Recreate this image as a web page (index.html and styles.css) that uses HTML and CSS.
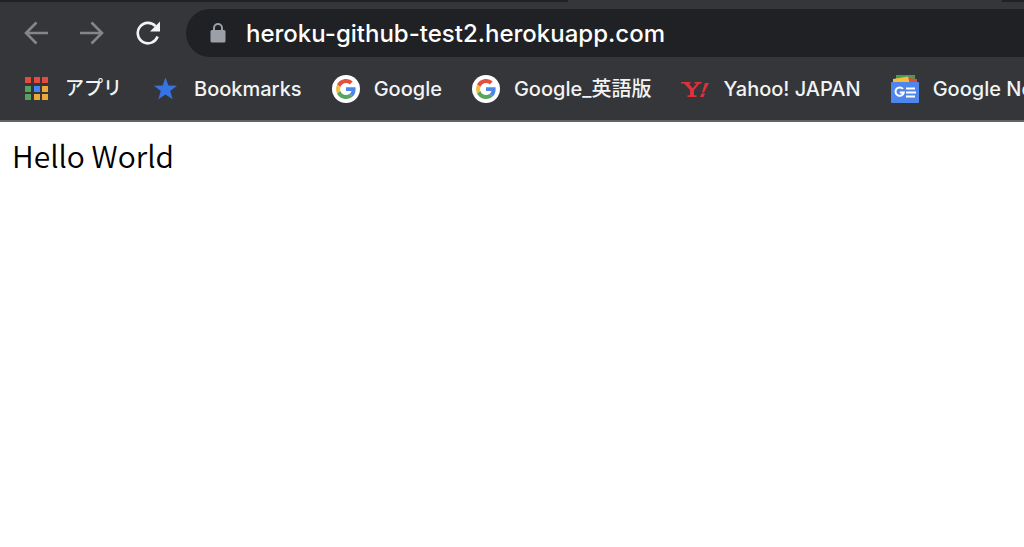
FILE: index.html
```html
<!DOCTYPE html>
<html lang="ja">
<head>
    <meta charset="UTF-8">
    <meta name="viewport" content="width=device-width, initial-scale=1.0">
    <title>heroku-github-test2.herokuapp.com</title>
    <link rel="stylesheet" href="styles.css">
</head>
<body>
    <svg class="symbols" aria-hidden="true">
        <symbol id="google" viewBox="0 0 28 28">
            <circle cx="14" cy="14" r="14" fill="#fff"/>
            <g transform="translate(4 4) scale(0.417)">
                <path fill="#e2503f" d="M24 9.5c3.54 0 6.71 1.22 9.21 3.6l6.85-6.85C35.9 2.38 30.47 0 24 0 14.62 0 6.51 5.38 2.56 13.22l7.98 6.19C12.43 13.72 17.74 9.5 24 9.5z"/>
                <path fill="#4f86ec" d="M46.98 24.55c0-1.57-.15-3.09-.38-4.55H24v9.02h12.94c-.58 2.96-2.26 5.48-4.78 7.18l7.73 6c4.51-4.18 7.09-10.36 7.09-17.65z"/>
                <path fill="#f3bd42" d="M10.53 28.59c-.48-1.45-.76-2.99-.76-4.59s.27-3.14.76-4.59l-7.98-6.19C.92 16.46 0 20.12 0 24c0 3.88.92 7.54 2.56 10.78l7.97-6.19z"/>
                <path fill="#58a55c" d="M24 48c6.48 0 11.93-2.13 15.89-5.81l-7.73-6c-2.15 1.45-4.92 2.3-8.16 2.3-6.26 0-11.57-4.22-13.47-9.91l-7.98 6.19C6.51 42.62 14.62 48 24 48z"/>
            </g>
        </symbol>
    </svg>

    <header class="browser">
        <div class="tab-strip">
            <div class="tab"></div>
        </div>

        <div class="toolbar">
            <button class="nav-button disabled" type="button" aria-label="Back">
                <svg width="24" height="24" viewBox="0 0 24 24"><path d="M24 12H2M12.500 1.500L2 12l10.500 10.500"/></svg>
            </button>
            <button class="nav-button disabled" type="button" aria-label="Forward">
                <svg width="24" height="24" viewBox="0 0 24 24"><path d="M0 12h22M11.500 1.500L22 12 11.500 22.500"/></svg>
            </button>
            <button class="nav-button" type="button" aria-label="Reload">
                <svg width="26" height="26" viewBox="0 0 26 26">
                    <path d="M22.6 16.5A10.2 10.2 0 1 1 20.5 6.2"/>
                    <path class="solid" d="M25 1.5v10H15z"/>
                </svg>
            </button>
            <div class="address-bar">
                <svg width="16" height="20" viewBox="0 0 16 20">
                    <path d="M4 8V5a4 4 0 0 1 8 0v3" fill="none" stroke="#9aa0a6" stroke-width="2"/>
                    <rect x="0.5" y="7" width="15" height="12.500" rx="1.5" fill="#9aa0a6"/>
                </svg>
                <input class="address" type="text" aria-label="Address" value="heroku-github-test2.herokuapp.com" spellcheck="false">
            </div>
        </div>

        <nav class="bookmarks">
            <a class="bookmark" href="#">
                <svg width="28" height="28" viewBox="0 0 28 28">
                    <path fill="#e34b3f" d="M2 2h6v6H2zM11 2h6v6h-6zM19 2h6v6h-6z"/>
                    <path fill="#57a15f" d="M2 11h6v6H2zM2 19h6v6H2z"/>
                    <path fill="#4285f4" d="M11 11h6v6h-6z"/>
                    <path fill="#eba93a" d="M19 11h6v6h-6zM11 19h6v6h-6zM19 19h6v6h-6z"/>
                </svg>
                <span class="kana">アプリ</span>
            </a>
            <a class="bookmark" href="#">
                <svg width="28" height="28" viewBox="0 0 28 28">
                    <path fill="#3574e2" d="M13.5 2.500l2.900 8 8.600.2-6.800 5.200 2.500 8.300-7.200-4.800-7.200 4.800 2.500-8.300L2 10.700l8.600-.2z"/>
                </svg>
                <span>Bookmarks</span>
            </a>
            <a class="bookmark" href="#">
                <svg width="28" height="28"><use href="#google"/></svg>
                <span>Google</span>
            </a>
            <a class="bookmark" href="#">
                <svg width="28" height="28"><use href="#google"/></svg>
                <span>Google_英語版</span>
            </a>
            <a class="bookmark" href="#">
                <svg width="28" height="28" viewBox="0 0 28 28" fill="#e0303a">
                    <path d="M0 7h9.500v1.500H7.600l4.200 4.700 4-4.700h-2.300V7h7v1.500h-2L13 15v5.300h2.500V22H6.500v-1.700H9V15L3 8.500H0z"/>
                    <path d="M24 8h4l-5 9.500h-2zM20.500 18.500h3.500l-1.500 3.500h-3.500z"/>
                </svg>
                <span>Yahoo! JAPAN</span>
            </a>
            <a class="bookmark" href="#">
                <svg width="28" height="28" viewBox="0 0 28 28">
                    <path fill="#4a9a56" d="M5 0h19v8H5z"/>
                    <path fill="#dd4b3e" d="M14 2.500l12 1.500v5H14z"/>
                    <path fill="#f7bc3c" d="M2 4l15-2.500 1.500 6V9H2z"/>
                    <path fill="#4f86ec" d="M1 7h26a1 1 0 0 1 1 1v19a1 1 0 0 1-1 1H1a1 1 0 0 1-1-1V8a1 1 0 0 1 1-1z"/>
                    <path fill="none" stroke="#fff" stroke-width="2" d="M12 14A4.200 4.200 0 1 0 12.800 17.500H8.800"/>
                    <path fill="#fff" d="M15 12.500h9v2h-9zM15 16.500h10v2H15zM15 20.500h9v2h-9z"/>
                </svg>
                <span>Google News</span>
            </a>
        </nav>
    </header>

    <main class="page">Hello World</main>
</body>
</html>
```
FILE: styles.css
```css
* {
    box-sizing: border-box;
}

body {
    margin: 0;
    background: #fff;
    color: #000;
}

.symbols {
    display: none;
}

.browser {
    background: #35363a;
    border-bottom: 2px solid #626367;
    font-family: Inter, "Noto Sans CJK JP", sans-serif;
    font-weight: 500;
    overflow: hidden;
}

.tab-strip {
    display: flex;
    justify-content: flex-end;
    height: 2px;
    padding-right: 22px;
    background: #202124;
}

.tab {
    width: 434px;
    background: #35363a;
}

.toolbar {
    display: flex;
    align-items: center;
    padding: 7px 0 0 8px;
}

.nav-button {
    display: flex;
    align-items: center;
    justify-content: center;
    width: 56px;
    height: 48px;
    padding: 0;
    border: 0;
    background: none;
    color: #f1f3f4;
}

.nav-button.disabled {
    color: #85868a;
}

.nav-button path {
    fill: none;
    stroke: currentColor;
    stroke-width: 2.6;
}

.nav-button .solid {
    fill: currentColor;
    stroke: none;
}

.address-bar {
    flex: 1;
    display: flex;
    align-items: center;
    gap: 20px;
    height: 48px;
    margin-left: 10px;
    padding-left: 24px;
    border-radius: 24px 0 0 24px;
    background: #202124;
}

.address {
    flex: 1;
    min-width: 0;
    padding: 0;
    border: 0;
    outline: 0;
    background: none;
    color: #fff;
    font-family: inherit;
    font-size: 24px;
    font-weight: inherit;
}

.bookmarks {
    display: flex;
    align-items: center;
    gap: 30px;
    height: 63px;
    padding-left: 23px;
}

.bookmark {
    flex: none;
    display: flex;
    align-items: center;
    gap: 14px;
    color: #f1f3f4;
    font-size: 20px;
    line-height: 28px;
    text-decoration: none;
    white-space: nowrap;
}

.kana {
    font-size: 19px;
}

.page {
    padding: 12px;
    font-family: "Noto Sans CJK JP", sans-serif;
    font-size: 30px;
    font-weight: 350;
    line-height: 42px;
}
```
